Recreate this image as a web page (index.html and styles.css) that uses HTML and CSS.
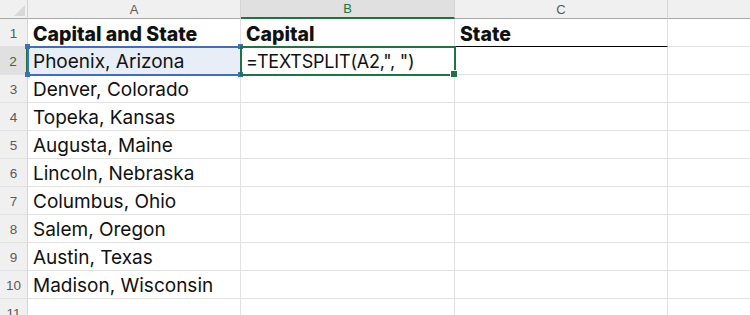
FILE: index.html
```html
<!DOCTYPE html>
<html>
<head>
<meta charset="utf-8">
<link rel="stylesheet" href="styles.css">
</head>
<body>
<div class="sheet">
  <div class="corner"><span class="tri"></span></div>
  <div class="colhead">A</div>
  <div class="colhead sel">B</div>
  <div class="colhead">C</div>
  <div class="colhead last"></div>

  <div class="rowhead">1</div>
  <div class="cell bold under">Capital and State</div>
  <div class="cell bold under">Capital</div>
  <div class="cell bold under">State</div>
  <div class="cell last"></div>

  <div class="rowhead sel">2</div>
  <div class="cell ref">Phoenix, Arizona<span class="h tl"></span><span class="h tr"></span><span class="h bl"></span><span class="h br"></span></div>
  <div class="cell active formula">=TEXTSPLIT(A2,", ")<span class="fill"></span></div>
  <div class="cell"></div>
  <div class="cell last"></div>

  <div class="rowhead">3</div>
  <div class="cell">Denver, Colorado</div>
  <div class="cell"></div>
  <div class="cell"></div>
  <div class="cell last"></div>

  <div class="rowhead">4</div>
  <div class="cell">Topeka, Kansas</div>
  <div class="cell"></div>
  <div class="cell"></div>
  <div class="cell last"></div>

  <div class="rowhead">5</div>
  <div class="cell">Augusta, Maine</div>
  <div class="cell"></div>
  <div class="cell"></div>
  <div class="cell last"></div>

  <div class="rowhead">6</div>
  <div class="cell">Lincoln, Nebraska</div>
  <div class="cell"></div>
  <div class="cell"></div>
  <div class="cell last"></div>

  <div class="rowhead">7</div>
  <div class="cell">Columbus, Ohio</div>
  <div class="cell"></div>
  <div class="cell"></div>
  <div class="cell last"></div>

  <div class="rowhead">8</div>
  <div class="cell">Salem, Oregon</div>
  <div class="cell"></div>
  <div class="cell"></div>
  <div class="cell last"></div>

  <div class="rowhead">9</div>
  <div class="cell">Austin, Texas</div>
  <div class="cell"></div>
  <div class="cell"></div>
  <div class="cell last"></div>

  <div class="rowhead">10</div>
  <div class="cell">Madison, Wisconsin</div>
  <div class="cell"></div>
  <div class="cell"></div>
  <div class="cell last"></div>

  <div class="rowhead">11</div>
  <div class="cell"></div>
  <div class="cell"></div>
  <div class="cell"></div>
  <div class="cell last"></div>
</div>
</body>
</html>
```
FILE: styles.css
```css
html, body {
  margin: 0;
  padding: 0;
  background: #ffffff;
  overflow: hidden;
}
.sheet {
  display: grid;
  grid-template-columns: 28px 213px 214px 213px 1fr;
  grid-template-rows: 19px repeat(11, 28px);
  width: 750px;
  height: 315px;
  overflow: hidden;
  font-family: Inter, "Liberation Sans", sans-serif;
}
.corner {
  position: relative;
  background: #f0f0f0;
  border-right: 1px solid #d4d4d4;
  border-bottom: 1px solid #a8a8a8;
  box-sizing: border-box;
}
.tri {
  position: absolute;
  right: 2px;
  bottom: 2px;
  width: 0;
  height: 0;
  border-left: 11px solid transparent;
  border-bottom: 11px solid #d8d8d8;
}
.colhead {
  background: #f0f0f0;
  border-right: 1px solid #d4d4d4;
  border-bottom: 1px solid #a8a8a8;
  box-sizing: border-box;
  color: #5a5a5a;
  font-family: "Liberation Sans", Arial, sans-serif;
  font-size: 13px;
  display: flex;
  align-items: center;
  justify-content: center;
}
.colhead.sel {
  background: #e0e0e0;
  color: #217346;
  border-bottom: 2px solid #217346;
}
.colhead.last {
  border-right: none;
}
.rowhead {
  background: #f0f0f0;
  border-right: 1px solid #d4d4d4;
  border-bottom: 1px solid #e1e1e1;
  box-sizing: border-box;
  color: #5a5a5a;
  font-family: "Liberation Sans", Arial, sans-serif;
  font-size: 13.5px;
  display: flex;
  align-items: center;
  justify-content: center;
  padding-top: 2px;
}
.rowhead.sel {
  background: #e0e0e0;
  color: #217346;
  border-right: 2px solid #217346;
}
.cell {
  position: relative;
  border-right: 1px solid #e1e1e1;
  border-bottom: 1px solid #e1e1e1;
  box-sizing: border-box;
  font-size: 19px;
  color: #111111;
  padding: 0 5px;
  display: flex;
  align-items: center;
  padding-top: 2px;
  white-space: nowrap;
}
.cell.last {
  border-right: none;
}
.bold {
  font-weight: 800;
  font-size: 19.5px;
}
.under {
  border-bottom: 1px solid #000000;
}
.formula {
  font-size: 18px;
  letter-spacing: -0.2px;
}
.ref {
  background: #e8eef7;
  outline: 2px solid #3f6fb5;
  outline-offset: -1px;
  z-index: 2;
}
.h {
  position: absolute;
  width: 5px;
  height: 5px;
  background: #3f6fb5;
}
.tl { left: -3px; top: -3px; }
.tr { right: -3px; top: -3px; }
.bl { left: -3px; bottom: -3px; }
.br { right: -3px; bottom: -3px; }
.active {
  outline: 2px solid #217346;
  outline-offset: -1px;
  z-index: 3;
}
.fill {
  position: absolute;
  right: -4px;
  bottom: -4px;
  width: 6px;
  height: 6px;
  background: #217346;
  border: 1px solid #ffffff;
}
```
